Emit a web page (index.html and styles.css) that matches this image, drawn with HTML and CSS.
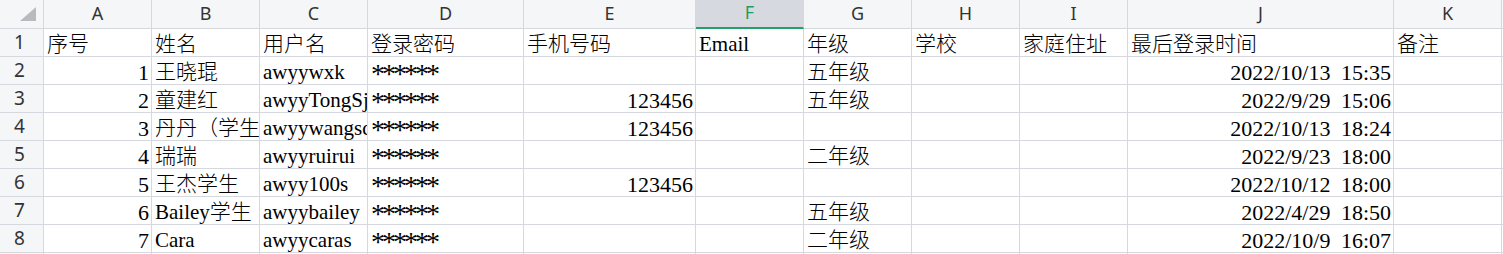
FILE: index.html
```html
<!DOCTYPE html>
<html lang="zh-CN">
<head>
<meta charset="utf-8">
<title>Sheet</title>
<link rel="stylesheet" href="styles.css">
</head>
<body>
<div class="sheet">
  <div class="corner"><span class="tri"></span></div>
  <div class="ch">A</div><div class="ch">B</div><div class="ch">C</div><div class="ch">D</div><div class="ch">E</div><div class="ch sel">F</div><div class="ch">G</div><div class="ch">H</div><div class="ch">I</div><div class="ch">J</div><div class="ch">K</div><div class="ch">L</div>

  <div class="rh">1</div>
  <div class="c">序号</div><div class="c">姓名</div><div class="c">用户名</div><div class="c">登录密码</div><div class="c">手机号码</div><div class="c">Email</div><div class="c">年级</div><div class="c">学校</div><div class="c">家庭住址</div><div class="c">最后登录时间</div><div class="c">备注</div><div class="c"></div>

  <div class="rh">2</div>
  <div class="c num">1</div><div class="c">王晓琨</div><div class="c">awyywxk</div><div class="c"><span class="pw">******</span></div><div class="c"></div><div class="c"></div><div class="c">五年级</div><div class="c"></div><div class="c"></div><div class="c num date">2022/10/13 15:35</div><div class="c"></div><div class="c"></div>

  <div class="rh">3</div>
  <div class="c num">2</div><div class="c">童建红</div><div class="c">awyyTongSjh</div><div class="c"><span class="pw">******</span></div><div class="c num">123456</div><div class="c"></div><div class="c">五年级</div><div class="c"></div><div class="c"></div><div class="c num date">2022/9/29 15:06</div><div class="c"></div><div class="c"></div>

  <div class="rh">4</div>
  <div class="c num">3</div><div class="c">丹丹（学生）</div><div class="c">awyywangsd</div><div class="c"><span class="pw">******</span></div><div class="c num">123456</div><div class="c"></div><div class="c"></div><div class="c"></div><div class="c"></div><div class="c num date">2022/10/13 18:24</div><div class="c"></div><div class="c"></div>

  <div class="rh">5</div>
  <div class="c num">4</div><div class="c">瑞瑞</div><div class="c">awyyruirui</div><div class="c"><span class="pw">******</span></div><div class="c"></div><div class="c"></div><div class="c">二年级</div><div class="c"></div><div class="c"></div><div class="c num date">2022/9/23 18:00</div><div class="c"></div><div class="c"></div>

  <div class="rh">6</div>
  <div class="c num">5</div><div class="c">王杰学生</div><div class="c">awyy100s</div><div class="c"><span class="pw">******</span></div><div class="c num">123456</div><div class="c"></div><div class="c"></div><div class="c"></div><div class="c"></div><div class="c num date">2022/10/12 18:00</div><div class="c"></div><div class="c"></div>

  <div class="rh">7</div>
  <div class="c num">6</div><div class="c">Bailey学生</div><div class="c">awyybailey</div><div class="c"><span class="pw">******</span></div><div class="c"></div><div class="c"></div><div class="c">五年级</div><div class="c"></div><div class="c"></div><div class="c num date">2022/4/29 18:50</div><div class="c"></div><div class="c"></div>

  <div class="rh">8</div>
  <div class="c num">7</div><div class="c">Cara</div><div class="c">awyycaras</div><div class="c"><span class="pw">******</span></div><div class="c"></div><div class="c"></div><div class="c">二年级</div><div class="c"></div><div class="c"></div><div class="c num date">2022/10/9 16:07</div><div class="c"></div><div class="c"></div>

  <div class="rh">9</div>
  <div class="c"></div><div class="c"></div><div class="c"></div><div class="c"></div><div class="c"></div><div class="c"></div><div class="c"></div><div class="c"></div><div class="c"></div><div class="c"></div><div class="c"></div><div class="c"></div>
</div>
</body>
</html>
```

FILE: styles.css
```css
html, body {
  margin: 0;
  padding: 0;
  background: #ffffff;
  overflow: hidden;
}

.sheet {
  display: grid;
  grid-template-columns: 44px 108px 108px 108px 156px 172px 108px 108px 108px 108px 266px 108px 108px;
  grid-template-rows: 29px repeat(9, 28px);
  width: max-content;
}

.sheet > div {
  box-sizing: border-box;
  border-right: 1px solid #d5d8df;
  border-bottom: 1px solid #d5d8df;
  overflow: hidden;
  white-space: nowrap;
}

.corner {
  background: #f5f6f8;
  position: relative;
}

.tri {
  position: absolute;
  left: 20px;
  top: 7px;
  width: 0;
  height: 0;
  border-left: 16px solid transparent;
  border-bottom: 14px solid #b9babd;
}

.ch {
  background: #f5f6f8;
  color: #333333;
  font-family: "Noto Sans", "Liberation Sans", sans-serif;
  font-size: 18px;
  line-height: 26px;
  text-align: center;
}

.ch.sel {
  background: #d6d9df;
  color: #1d9f62;
  border-bottom: 2px solid #21a366 !important;
  line-height: 25px;
}

.rh {
  background: #f5f6f8;
  color: #333333;
  font-family: "Noto Sans", "Liberation Sans", sans-serif;
  font-size: 19px;
  line-height: 26px;
  padding-right: 4px;
  text-align: center;
}

.c {
  color: #000000;
  font-family: "Liberation Serif", "Noto Sans CJK SC", serif;
  font-size: 21px;
  font-weight: 300;
  line-height: 21px;
  padding: 5px 2px 0 3px;
  text-align: left;
}

.num {
  text-align: right;
  font-size: 22px;
  padding-right: 2px;
}

.date {
  word-spacing: 5px;
}

.pw {
  font-family: "Liberation Serif", serif;
  font-size: 28px;
  line-height: 0;
  letter-spacing: -3px;
  vertical-align: -4px;
}
```
